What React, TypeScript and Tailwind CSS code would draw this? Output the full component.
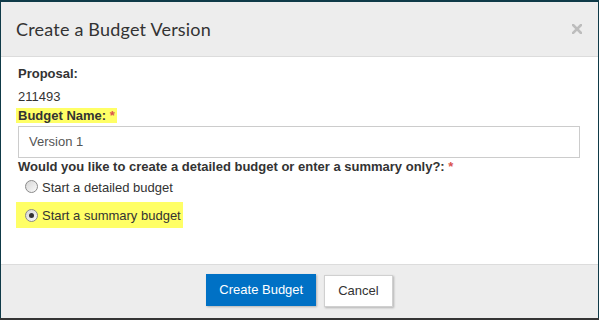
export default function App() {
  return (
    <div className="w-[599px] h-[320px] bg-[#0f3a48] flex flex-col pt-[2px] pl-[1px] pr-[1px] overflow-hidden">
      <div className="flex-1 flex flex-col bg-white" style={{ fontFamily: '"Liberation Sans", Arial, sans-serif' }}>
        {/* Header */}
        <div className="h-[55px] shrink-0 bg-[#ededed] border-b border-[#dcdcdc] flex items-center justify-between pl-[15px] pr-[16px]">
          <div className="text-[18px] text-[#333] tracking-[0.2px] pt-[1px]" style={{ fontFamily: 'Lato, "Open Sans", sans-serif' }}>
            Create a Budget Version
          </div>
          <svg width="10" height="10" viewBox="0 0 10 10" className="mb-[1px]">
            <path d="M1 1 L9 9 M9 1 L1 9" stroke="#bdbdbd" strokeWidth="2.6" strokeLinecap="square" />
          </svg>
        </div>

        {/* Body */}
        <div className="h-[207px] shrink-0 pl-[17px] pr-[17px] pt-[8px] text-[13px] leading-[18px] text-[#333]">
          <div className="font-bold">Proposal:</div>
          <div className="mt-[5px]">211493</div>
          <div className="mt-[1px] font-bold">
            <span className="bg-[#ffff66] -ml-[2px] pl-[2px] pr-[2px]">
              Budget Name: <span className="text-[#d9534f]">*</span>
            </span>
          </div>
          <div className="mt-[1px] h-[32px] w-[562px] border border-[#cccccc] flex items-center pl-[10px] text-[#555]">
            Version 1
          </div>
          <div className="font-bold">
            Would you like to create a detailed budget or enter a summary only?: <span className="text-[#d9534f]">*</span>
          </div>
          <div className="mt-[3px] flex items-start pl-[7px]">
            <Radio checked={false} />
            <span className="ml-[4px]">Start a detailed budget</span>
          </div>
          <div className="mt-[5px] -ml-[2px] w-[167px] h-[26px] bg-[#ffff66] flex items-center pl-[9px]">
            <Radio checked={true} />
            <span className="ml-[4px] mt-[1px]">Start a summary budget</span>
          </div>
        </div>

        {/* Footer */}
        <div className="flex-1 bg-[#ededed] border-t border-[#dcdcdc] flex justify-center items-start pt-[9px] gap-[8px] text-[13px]">
          <button className="h-[32px] px-[13px] bg-[#0071c5] text-white shadow-[1px_1px_2px_rgba(0,0,0,0.25)]">
            Create Budget
          </button>
          <button className="mt-[1px] h-[32px] px-[13px] bg-white text-[#333] border border-[#d0d0d0] shadow-[1px_1px_2px_rgba(0,0,0,0.25)]">
            Cancel
          </button>
        </div>
      </div>
      <div className="h-[2px] shrink-0 bg-[#353535] -mx-[1px]" />
    </div>
  );
}

function Radio({ checked }: { checked: boolean }) {
  return (
    <div className="mt-[1px] w-[13px] h-[13px] rounded-full border border-[#8a8a8a] bg-gradient-to-br from-[#d6d6d6] to-[#fafafa] flex items-center justify-center shrink-0">
      {checked && <div className="w-[5px] h-[5px] rounded-full bg-[#333]" />}
    </div>
  );
}
